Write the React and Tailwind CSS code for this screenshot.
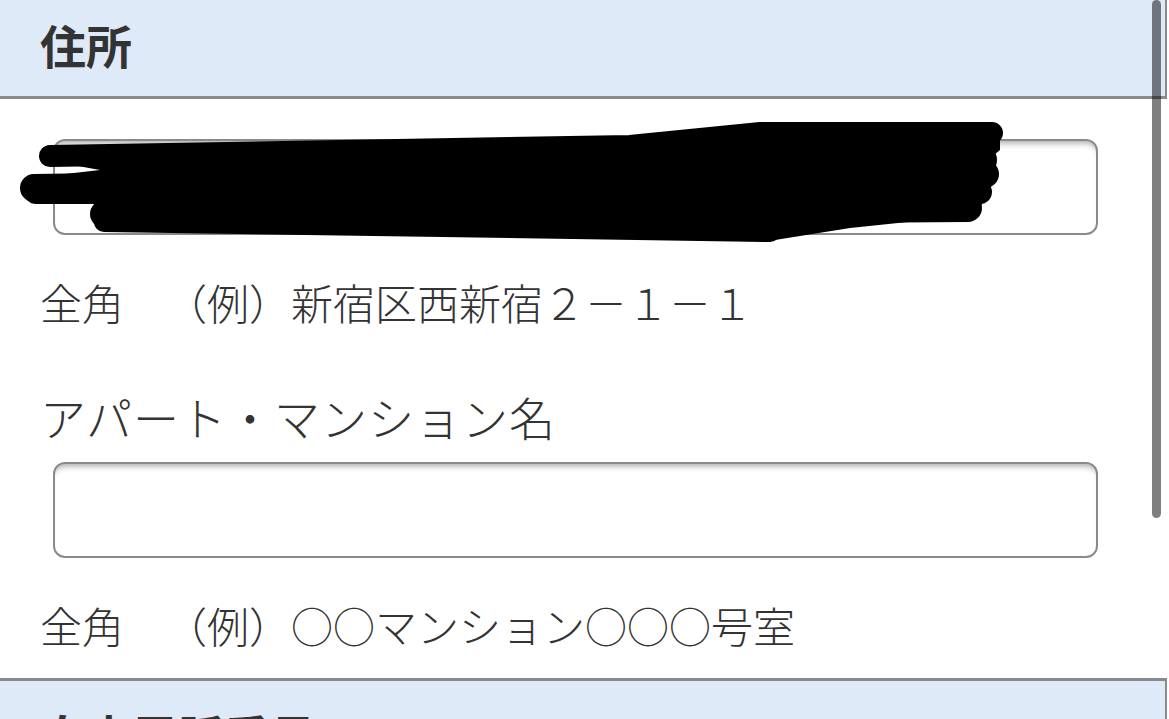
import React from "react";

const jp = { fontFamily: '"Noto Sans CJK JP", "Noto Sans", sans-serif' };

// Section header band (light blue with grey rule)
const SectionHeader = ({ title, className = "" }) => (
  <div
    className={`bg-[#dfeaf8] border-r-2 border-[#8a8a8a] h-[99px] pl-[40px] flex text-[#333] text-[46px] font-bold ${className}`}
  >
    <span className="leading-none">{title}</span>
  </div>
);

const TextBox = ({ className = "" }) => (
  <div
    className={`ml-[53px] w-[1045px] h-[96px] rounded-[12px] border-2 border-[#8a8a8a] bg-white shadow-[inset_0_7px_6px_-5px_rgba(0,0,0,0.35)] ${className}`}
  />
);

const Hint = ({ example, className = "" }) => (
  <p className={`pl-[40px] text-[42px] leading-[60px] whitespace-pre ${className}`}>
    全角<span className="ml-[20px]">　（例）{example}</span>
  </p>
);

// Black marker scribble hiding the entered address
const Redaction = () => (
  <svg
    className="absolute left-0 top-0 pointer-events-none"
    width="1169"
    height="260"
    viewBox="0 0 1169 260"
  >
    <polygon
      fill="#000"
      points="90,148 640,145 760,130 1000,130 1000,150 988,160 988,195 975,215 850,228 775,240 100,229 100,200 30,200 30,178 100,170 45,160"
    />
    <g stroke="#000" strokeLinecap="round" fill="none">
      <path d="M50 156 L630 146 L760 133 L992 133" strokeWidth="22" />
      <path d="M34 188 L985 174" strokeWidth="28" />
      <path d="M36 192 L980 192" strokeWidth="24" />
      <path d="M104 214 L968 208" strokeWidth="28" />
      <path d="M104 222 L770 232" strokeWidth="20" />
      <path d="M300 162 L982 160" strokeWidth="30" />
    </g>
  </svg>
);

export default function App() {
  return (
    <div className="relative w-[1169px] h-[719px] overflow-hidden bg-white" style={jp}>
      <div className="w-[1167px]">
        <SectionHeader title="住所" className="border-b-[3px] items-center pb-[8px]" />

        <div className="pt-[40px] pb-[23px] text-[#333] font-light">
          <TextBox />
          <Hint example="新宿区西新宿２－１－１" className="mt-[37px]" />
          <p className="mt-[54px] pl-[40px] text-[46px] leading-[60px] tracking-[1px]">
            アパート・マンション名
          </p>
          <TextBox className="mt-[16px]" />
          <Hint example="○○マンション○○○号室" className="mt-[37px]" />
        </div>

        <SectionHeader title="自宅電話番号" className="border-t-[3px] items-start pt-[30px]" />
      </div>

      <Redaction />

      {/* scrollbar thumb */}
      <div className="absolute left-[1152px] top-0 w-[9px] h-[518px] rounded-full bg-black/50" />
    </div>
  );
}
